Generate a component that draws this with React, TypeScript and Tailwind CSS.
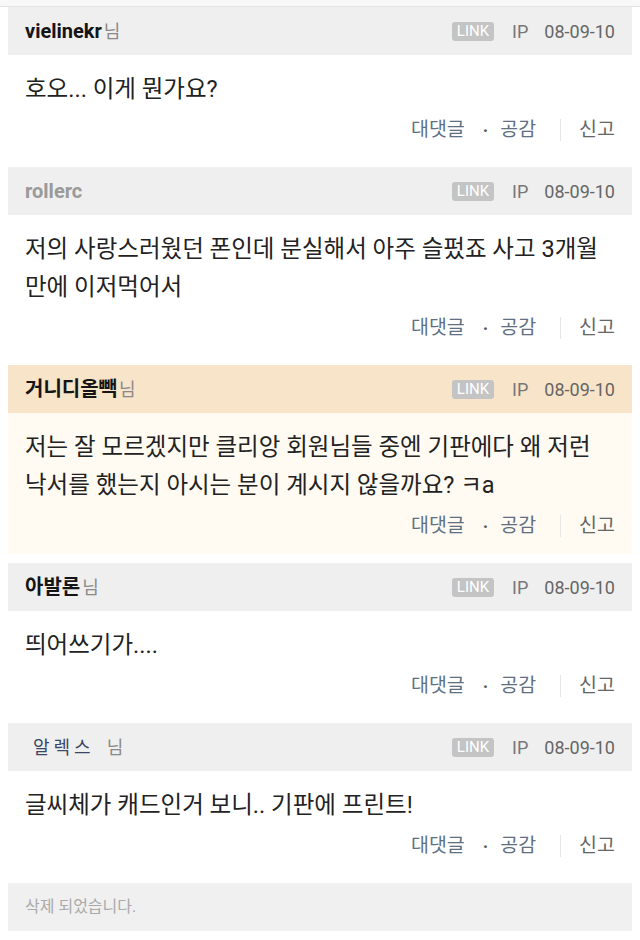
import React from 'react';

type Comment = {
  id: number;
  name: string;
  nameStyle: 'bold' | 'gray' | 'image';
  suffix: boolean;
  lines: string[];
  highlight?: boolean;
};

const COMMENTS: Comment[] = [
  { id: 1, name: 'vielinekr', nameStyle: 'bold', suffix: true, lines: ['호오... 이게 뭔가요?'] },
  {
    id: 2,
    name: 'rollerc',
    nameStyle: 'gray',
    suffix: false,
    lines: ['저의 사랑스러웠던 폰인데 분실해서 아주 슬펐죠 사고 3개월', '만에 이저먹어서'],
  },
  {
    id: 3,
    name: '거니디올빽',
    nameStyle: 'bold',
    suffix: true,
    highlight: true,
    lines: ['저는 잘 모르겠지만 클리앙 회원님들 중엔 기판에다 왜 저런', '낙서를 했는지 아시는 분이 계시지 않을까요? ㅋa'],
  },
  { id: 4, name: '아발론', nameStyle: 'bold', suffix: true, lines: ['띄어쓰기가....'] },
  { id: 5, name: '알렉스', nameStyle: 'image', suffix: true, lines: ['글씨체가 캐드인거 보니.. 기판에 프린트!'] },
];

const FONT = "font-['Roboto','Noto_Sans_CJK_KR',sans-serif]";

const CommentCard = ({ c }: { c: Comment }) => (
  <div className="mb-[9px]">
    {/* header */}
    <div
      className={`h-[48px] flex items-center justify-between pl-[17px] pr-[17px] ${
        c.highlight ? 'bg-[#f8e4c9]' : 'bg-[#efefef]'
      }`}
    >
      <div className="flex items-center">
        {c.nameStyle === 'bold' && (
          <span className="text-[20px] font-bold text-[#151515]">{c.name}</span>
        )}
        {c.nameStyle === 'gray' && (
          <span className="text-[20px] font-bold text-[#9a9a9a]">{c.name}</span>
        )}
        {c.nameStyle === 'image' && (
          <span className="ml-[8px] mr-[10px] text-[18px] tracking-[4px] text-[#3b4766]">{c.name}</span>
        )}
        {c.suffix && <span className="text-[18px] text-[#8a8a8a] ml-[2px]">님</span>}
      </div>
      <div className="flex items-center">
        <span className="h-[19px] px-[5px] rounded-[3px] bg-[#c4c4c4] text-white text-[15px] leading-[19px]">
          LINK
        </span>
        <span className="ml-[18px] text-[18px] text-[#777]">IP</span>
        <span className="ml-[16px] text-[18px] text-[#666]">08-09-10</span>
      </div>
    </div>
    {/* body */}
    <div className={`pt-[15px] pb-[9px] pl-[17px] pr-[17px] ${c.highlight ? 'bg-[#fffaf2]' : 'bg-white'}`}>
      {c.lines.map((l, i) => (
        <div key={i} className="text-[23.5px] leading-[38px] text-[#222] whitespace-nowrap">
          {l}
        </div>
      ))}
      <div className="mt-[3px] h-[38px] flex items-center justify-end text-[19.5px]">
        <span className="text-[#5f7083]">대댓글</span>
        <span className="ml-[18px] mr-[12px] text-[#555] text-[18px] font-bold">·</span>
        <span className="text-[#5f7083]">공감</span>
        <span className="ml-[24px] mr-[18px] w-px h-[22px] bg-[#e6e6e6]" />
        <span className="text-[#666]">신고</span>
      </div>
    </div>
  </div>
);

const App: React.FC = () => {
  return (
    <div className={`min-h-screen bg-white ${FONT}`}>
      <div className="h-[7px] bg-[#f8f8f8] border-b border-[#e4e4e4]" />
      <div className="px-[8px]">
        {COMMENTS.map(c => (
          <CommentCard key={c.id} c={c} />
        ))}
        <div className="h-[48px] bg-[#f0f0f0] flex items-center pl-[17px] text-[16px] text-[#aaa]">
          삭제 되었습니다.
        </div>
      </div>
    </div>
  );
};

export default App;
